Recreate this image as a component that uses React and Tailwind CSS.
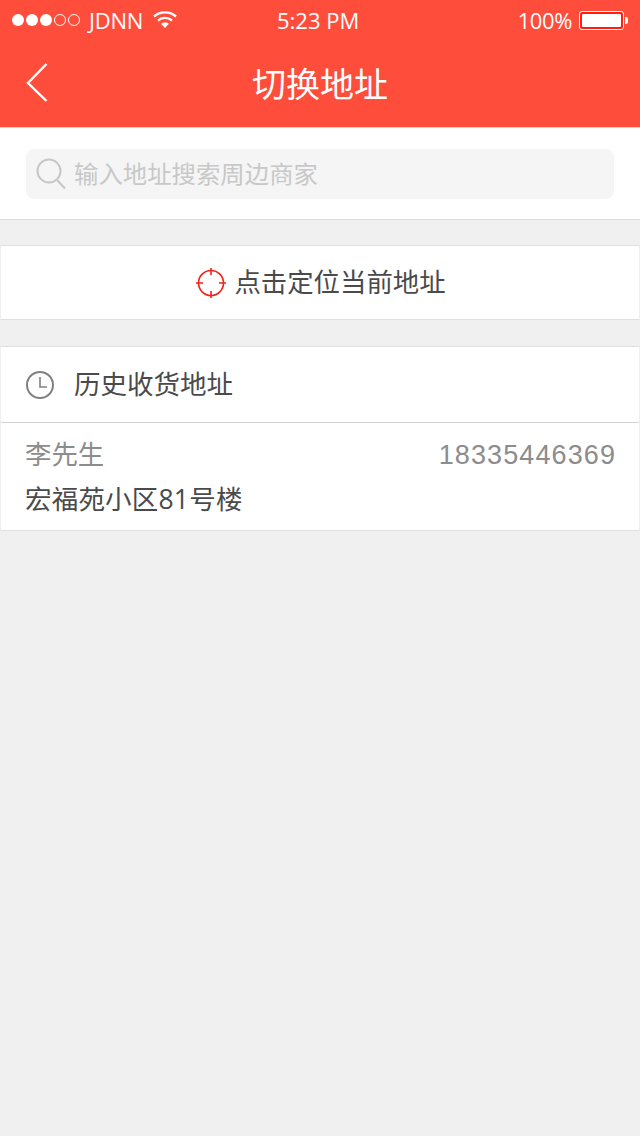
import React from 'react';

const cjk = "font-['Open_Sans','Noto_Sans_CJK_SC',sans-serif]";

function Dots() {
  return (
    <div className="flex items-center gap-[2px]">
      {[1, 1, 1, 0, 0].map((on, i) => (
        <span
          key={i}
          className={on ? 'w-[12px] h-[12px] rounded-full bg-white' : 'w-[12px] h-[12px] rounded-full border border-white'}
        />
      ))}
    </div>
  );
}

function Wifi() {
  return (
    <svg width="26" height="20" viewBox="0 0 26 20" fill="none" stroke="#fff" strokeWidth="2.4">
      <path d="M2 7.5 C8 2 18 2 24 7.5" />
      <path d="M6 11.5 C10 8 16 8 20 11.5" />
      <path d="M13 19 L9 14.8 C11 13.2 15 13.2 17 14.8 Z" fill="#fff" stroke="none" />
    </svg>
  );
}

function StatusBar() {
  return (
    <div className="h-[40px] flex items-center justify-between pl-[12px] pr-[12px] text-white text-[22px] font-['Open_Sans',sans-serif] relative">
      <div className="flex items-center">
        <Dots />
        <span className="ml-[9px] tracking-[-0.2px]">JDNN</span>
        <span className="ml-[9px] mt-[-2px]"><Wifi /></span>
      </div>
      <span className="absolute left-[277px] top-[4px]">5:23 PM</span>
      <div className="flex items-center">
        <span className="tracking-[-0.4px]">100%</span>
        <div className="ml-[7px] w-[45px] h-[19px] rounded-[3px] border border-white p-[2px] bg-[#ff1f10]">
          <div className="w-full h-full bg-white rounded-[1px]" />
        </div>
        <div className="ml-px w-[3px] h-[7px] bg-white rounded-r-[2px]" />
      </div>
    </div>
  );
}

export default function App() {
  return (
    <div className={`w-[640px] h-[1136px] bg-[#f0f0f0] ${cjk}`}>
      <div className="h-[128px] bg-[#ff4d3c] border-b border-[#d8d8d8]">
        <StatusBar />
        <div className="h-[87px] flex items-center relative">
          <svg className="absolute left-[25px] top-[22px]" width="24" height="40" viewBox="0 0 24 40" fill="none" stroke="#fff" strokeWidth="2.4">
            <path d="M21.5 2 L3 21 L21.5 39" />
          </svg>
          <h1 className="w-full text-center text-white text-[34px] leading-[44px]">切换地址</h1>
        </div>
      </div>

      <div className="h-[92px] bg-white border-b border-[#dcdcdc] pt-[21px] px-[26px]">
        <div className="h-[50px] bg-[#f5f5f5] rounded-[8px] flex items-center pl-[10px]">
          <svg width="30" height="32" viewBox="0 0 30 32" fill="none" stroke="#c6c6c6" strokeWidth="2">
            <circle cx="13" cy="13" r="11.5" />
            <path d="M21 22 L29 30.5" />
          </svg>
          <span className="ml-[8px] text-[24.4px] text-[#c8c8c8]">输入地址搜索周边商家</span>
        </div>
      </div>

      <div className="mt-[25px] h-[75px] bg-white border-y border-x border-y-[#e0e0e0] border-x-[#efefef] flex items-center justify-center pl-[2px]">
        <svg width="30" height="30" viewBox="0 0 30 30" fill="none" stroke="#f5211a" strokeWidth="1.6">
          <circle cx="15" cy="15" r="12.5" />
          <path d="M15 0 V7 M15 23 V30 M0 15 H7 M23 15 H30" />
        </svg>
        <span className="ml-[8px] text-[26.4px] text-[#4a4a4a]">点击定位当前地址</span>
      </div>

      <div className="mt-[26px] bg-white border-y border-x border-y-[#e0e0e0] border-x-[#efefef]">
        <div className="h-[76px] flex items-center pl-[24px] border-b border-[#d4d4d4]">
          <svg width="30" height="30" viewBox="0 0 30 30" fill="none" stroke="#808080" strokeWidth="2">
            <circle cx="15" cy="15" r="13" />
            <path d="M15 7 V17 H22" strokeWidth="1.6" />
          </svg>
          <span className="ml-[19px] text-[26.5px] text-[#4a4a4a]">历史收货地址</span>
        </div>
        <div className="h-[107px] pl-[24px] pr-[23px] pt-[10px]">
          <div className="flex justify-between items-center h-[44px] text-[26.4px] text-[#8c8c8c]">
            <span>李先生</span>
            <span className="font-['Liberation_Sans',sans-serif] text-[27px] tracking-[1.1px]">18335446369</span>
          </div>
          <div className="h-[46px] flex items-center text-[26.5px] text-[#4a4a4a] tracking-[0.2px]">宏福苑小区81号楼</div>
        </div>
      </div>
    </div>
  );
}
